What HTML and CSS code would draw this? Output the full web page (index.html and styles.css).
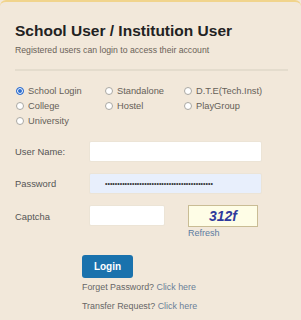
FILE: index.html
```html
<!DOCTYPE html>
<html lang="en">
<head>
    <meta charset="UTF-8">
    <title>School User Login</title>
    <link rel="stylesheet" href="styles.css">
</head>
<body>
    <div class="panel">
        <h1 class="title">School User / Institution User</h1>
        <p class="subtitle">Registered users can login to access their account</p>
        <hr class="divider">

        <div class="types">
            <label class="type"><input type="radio" name="type" checked> School Login</label>
            <label class="type"><input type="radio" name="type"> Standalone</label>
            <label class="type"><input type="radio" name="type"> D.T.E(Tech.Inst)</label>
            <label class="type"><input type="radio" name="type"> College</label>
            <label class="type"><input type="radio" name="type"> Hostel</label>
            <label class="type"><input type="radio" name="type"> PlayGroup</label>
            <label class="type"><input type="radio" name="type"> University</label>
        </div>

        <div class="form">
            <div class="row">
                <label class="label">User Name:</label>
                <input class="field" type="text">
            </div>
            <div class="row">
                <label class="label">Password</label>
                <input class="field filled" type="password" value="schooluserpasswordvalueforloginformfield1234">
            </div>
            <div class="row captcha-row">
                <label class="label">Captcha</label>
                <input class="field short" type="text">
                <div class="captcha">
                    <div class="captcha-box">312f</div>
                    <a class="refresh" href="#">Refresh</a>
                </div>
            </div>
        </div>

        <div class="actions">
            <button class="login">Login</button>
            <p class="link-line">Forget Password? <a href="#">Click here</a></p>
            <p class="link-line">Transfer Request? <a href="#">Click here</a></p>
        </div>
    </div>
</body>
</html>
```

FILE: styles.css
```css
body {
    margin: 0;
    background-color: #f2e8da;
    font-family: "Liberation Sans", Arial, sans-serif;
    color: #555;
}
.panel {
    border-top: 2px solid #f1d48c;
    border-radius: 6px 6px 0 0;
    padding: 0 13px 0 15px;
    height: 318px;
    overflow: hidden;
}
.title {
    margin: 20px 0 0;
    font-size: 15.5px;
    font-weight: bold;
    color: #222;
}
.subtitle {
    margin: 5px 0 0;
    font-size: 8.7px;
    color: #6a6258;
}
.divider {
    margin: 14px 0 0;
    border: none;
    height: 2px;
    background-color: #e4dccd;
}
.types {
    display: grid;
    grid-template-columns: 89px 79px 1fr;
    row-gap: 2px;
    margin-top: 13px;
    padding-left: 1px;
}
.type {
    display: flex;
    align-items: center;
    gap: 4px;
    font-size: 9.3px;
    color: #656058;
    height: 13px;
}
.type input {
    appearance: none;
    margin: 0;
    width: 8px;
    height: 8px;
    border: 1px solid #aaa8a3;
    border-radius: 50%;
    background-color: #fff;
}
.type input:checked {
    border-color: #2f6fd0;
    background-color: #2f6fd0;
    box-shadow: inset 0 0 0 1px #fff;
}
.form {
    margin-top: 14px;
}
.row {
    display: flex;
    align-items: center;
    margin-bottom: 11px;
}
.label {
    width: 74px;
    font-size: 9.4px;
    color: #555;
}
.field {
    width: 173px;
    height: 21px;
    box-sizing: border-box;
    border: 1px solid #ece4d6;
    border-radius: 2px;
    background-color: #fff;
    margin: 0;
    padding: 0 8px;
    font-family: inherit;
    font-size: 7px;
    color: #333;
}
.field.filled {
    background-color: #e8effc;
    padding-left: 15px;
}
.field.short {
    width: 76px;
}
.captcha-row {
    align-items: flex-start;
}
.captcha-row .label {
    margin-top: 6px;
}
.captcha {
    margin-left: 23px;
}
.captcha-box {
    width: 70px;
    height: 22px;
    box-sizing: border-box;
    border: 1px solid #c9bc94;
    background-color: #fefde6;
    font-size: 14px;
    font-weight: bold;
    font-style: italic;
    color: #2f3a9c;
    text-align: center;
    line-height: 20px;
}
.refresh {
    display: block;
    margin-top: 1px;
    font-size: 9px;
    color: #5b7ba1;
    text-decoration: none;
}
.actions {
    margin-left: 67px;
    margin-top: 17px;
}
.login {
    width: 51px;
    height: 23px;
    border: none;
    border-radius: 3px;
    background-color: #1a72ad;
    color: #fff;
    font-family: inherit;
    font-size: 10px;
    font-weight: bold;
}
.link-line {
    margin: 3px 0 0;
    font-size: 8.9px;
    color: #666;
    line-height: 12px;
}
.link-line + .link-line {
    margin-top: 7px;
}
.link-line a {
    color: #6a7f98;
    text-decoration: none;
}
```
